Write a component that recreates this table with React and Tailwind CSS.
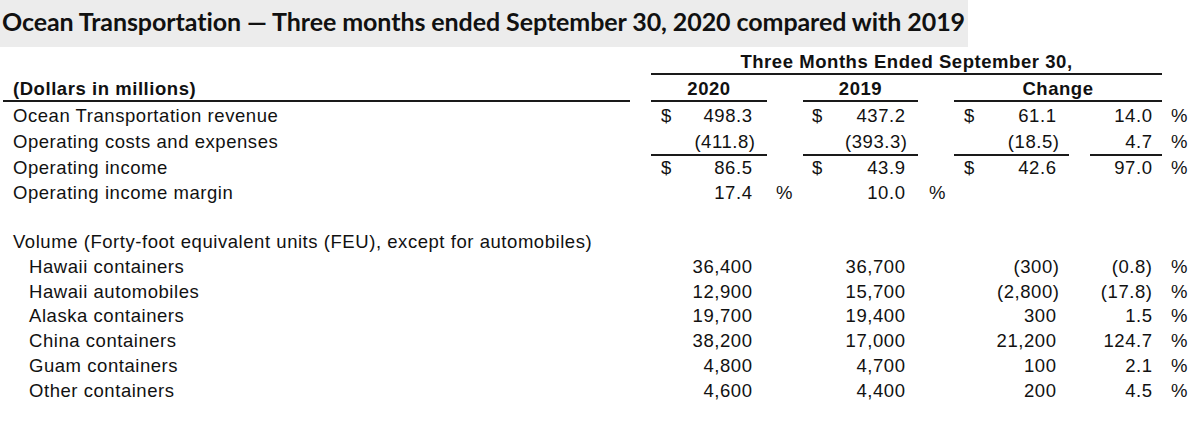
import React from "react";

const upper = [
  { label: "Ocean Transportation revenue", a: "498.3", b: "437.2", c: "61.1", p: "14.0", pct: true },
  { label: "Operating costs and expenses", a: "(411.8)", b: "(393.3)", c: "(18.5)", p: "4.7", pct: true, line: true },
  { label: "Operating income", a: "86.5", b: "43.9", c: "42.6", p: "97.0", pct: true },
  { label: "Operating income margin", a: "17.4", b: "10.0", margin: true },
];

const lower = [
  ["Hawaii containers", "36,400", "36,700", "(300)", "(0.8)"],
  ["Hawaii automobiles", "12,900", "15,700", "(2,800)", "(17.8)"],
  ["Alaska containers", "19,700", "19,400", "300", "1.5"],
  ["China containers", "38,200", "17,000", "21,200", "124.7"],
  ["Guam containers", "4,800", "4,700", "100", "2.1"],
  ["Other containers", "4,600", "4,400", "200", "4.5"],
];

const isParen = (v) => v && v.startsWith("(");

function Num({ v, pos, neg }) {
  return <span className={isParen(v) ? neg : pos}>{v}</span>;
}

function Row({ label, indent, dollar, a, b, c, p, pct, margin, line, lh }) {
  const bl = line ? "border-b-2 border-[#1a1a1a]" : "";
  return (
    <div className={`flex ${lh}`}>
      <div className={`w-[651px] ${indent ? "pl-[29px]" : "pl-[13px]"}`}>{label}</div>
      <div className={`w-[116px] flex justify-between pl-[10px] ${bl}`}>
        <span>{dollar ? "$" : ""}</span>
        <Num v={a} pos="pr-[14.5px]" neg="pr-[11.5px]" />
      </div>
      <div className="w-[36px] pl-[9px]">{margin ? "%" : ""}</div>
      <div className={`w-[115px] flex justify-between pl-[9px] ${bl}`}>
        <span>{dollar ? "$" : ""}</span>
        <Num v={b} pos="pr-[12.5px]" neg="pr-[10.5px]" />
      </div>
      <div className="w-[36px] pl-[11px]">{margin ? "%" : ""}</div>
      <div className={`w-[115px] flex justify-between pl-[10px] ${bl}`}>
        <span>{dollar ? "$" : ""}</span>
        <Num v={c} pos="pr-[12.5px]" neg="pr-[9.5px]" />
      </div>
      <div className="w-[21px]" />
      <div className={`w-[72px] text-right pr-[9.5px] ${bl}`}>{p}</div>
      <div className="pl-[9px]">{pct ? "%" : ""}</div>
    </div>
  );
}

export default function App() {
  return (
    <div className="w-[1200px] h-[425px] bg-white overflow-hidden text-[#111111]">
      <div className="w-[968px] h-[47px] bg-[#ececec] pl-[2px] pt-[6px]">
        <h1
          className="text-[25px] leading-[30px] font-bold tracking-[-0.08px] whitespace-nowrap"
          style={{ fontFamily: "Lato, 'Open Sans', sans-serif" }}
        >
          Ocean Transportation — Three months ended September 30, 2020 compared with 2019
        </h1>
      </div>

      <div
        className="text-[18.5px] tracking-[0.55px]"
        style={{ fontFamily: "'Liberation Sans', Arial, sans-serif" }}
      >
        {/* header 1 */}
        <div className="flex mt-[3.3px] leading-[23px] font-bold">
          <div className="w-[651px]" />
          <div className="w-[511px] text-center border-b-2 border-[#1a1a1a]">
            Three Months Ended September 30,
          </div>
        </div>
        {/* header 2 */}
        <div className="flex mt-[1.6px] leading-[23px] font-bold">
          <div className="ml-[3px] w-[627px] pl-[10px] border-b-2 border-[#1a1a1a]">
            (Dollars in millions)
          </div>
          <div className="w-[21px]" />
          <div className="w-[116px] text-center border-b-2 border-[#1a1a1a]">2020</div>
          <div className="w-[36px]" />
          <div className="w-[115px] text-center border-b-2 border-[#1a1a1a]">2019</div>
          <div className="w-[36px]" />
          <div className="w-[208px] text-center border-b-2 border-[#1a1a1a]">Change</div>
        </div>

        {/* upper section */}
        <div className="mt-[1.2px]">
          <Row {...upper[0]} dollar lh="leading-[25.5px]" />
          <Row {...upper[1]} lh="leading-[25.5px]" />
          <div className="-mt-[1.5px]">
            <Row {...upper[2]} dollar lh="leading-[25.5px]" />
          </div>
          <div className="-mt-[0.5px]">
            <Row {...upper[3]} lh="leading-[25.5px]" />
          </div>
        </div>

        {/* lower section */}
        <div className="mt-[25px] leading-[24.8px]">
          <div className="pl-[13px]">
            Volume (Forty-foot equivalent units (FEU), except for automobiles)
          </div>
          {lower.map(([l, a, b, c, p]) => (
            <Row key={l} label={l} indent a={a} b={b} c={c} p={p} pct lh="leading-[24.8px]" />
          ))}
        </div>
      </div>
    </div>
  );
}
